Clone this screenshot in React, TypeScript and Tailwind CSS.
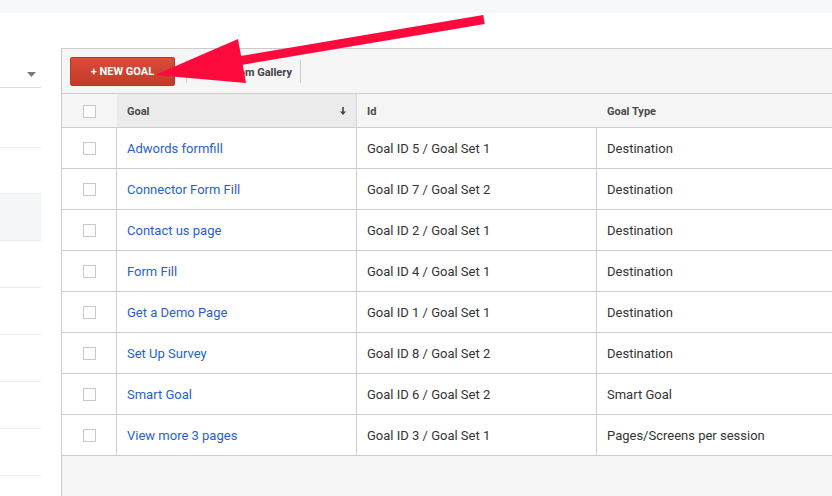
import React from 'react'

const goals = [
    { name: 'Adwords formfill', id: 'Goal ID 5 / Goal Set 1', type: 'Destination' },
    { name: 'Connector Form Fill', id: 'Goal ID 7 / Goal Set 2', type: 'Destination' },
    { name: 'Contact us page', id: 'Goal ID 2 / Goal Set 1', type: 'Destination' },
    { name: 'Form Fill', id: 'Goal ID 4 / Goal Set 1', type: 'Destination' },
    { name: 'Get a Demo Page', id: 'Goal ID 1 / Goal Set 1', type: 'Destination' },
    { name: 'Set Up Survey', id: 'Goal ID 8 / Goal Set 2', type: 'Destination' },
    { name: 'Smart Goal', id: 'Goal ID 6 / Goal Set 2', type: 'Smart Goal' },
    { name: 'View more 3 pages', id: 'Goal ID 3 / Goal Set 1', type: 'Pages/Screens per session' },
]

const Checkbox = () => (
    <span className="block h-[13px] w-[13px] border border-[#c8c8c8] bg-white" />
)

const Sidebar = () => (
    <aside className="w-[41px] shrink-0">
        <div className="flex h-[75px] items-start justify-end border-b border-[#dcdcdc] pr-[5px] pt-[59px]">
            <svg width="9" height="5" viewBox="0 0 9 5">
                <path d="M0 0h9L4.5 5z" fill="#7a7a7a" />
            </svg>
        </div>
        <div className="h-[60px] border-b border-[#ececec]" />
        <div className="h-[46px] border-b border-[#ececec]" />
        <div className="h-[47px] border-b border-[#ececec] bg-[#f5f6f8]" />
        <div className="h-[47px] border-b border-[#ececec]" />
        <div className="h-[47px] border-b border-[#ececec]" />
        <div className="h-[47px] border-b border-[#ececec]" />
        <div className="h-[47px] border-b border-[#ececec]" />
        <div className="h-[47px] border-b border-[#ececec]" />
    </aside>
)

const Toolbar = () => (
    <div className="flex h-[45px] items-start border-b border-[#cccccc] bg-[#f5f5f5] pl-[8px] pt-[8px] shadow-[0_1px_2px_rgba(0,0,0,0.08)]">
        <button className="flex h-[29px] w-[105px] items-center justify-center rounded-[2px] border border-[#b3392a] bg-gradient-to-b from-[#dc4c3a] to-[#c33a29] pt-px text-[11px] font-bold text-white">
            + NEW GOAL
        </button>
        <div className="ml-[11px] mt-[3px] flex h-[23px] items-center border-x border-[#cccccc] px-[8px] pt-[3px]">
            <span className="text-[11px] font-bold text-[#444]">Import from Gallery</span>
        </div>
    </div>
)

const GoalsTable = () => (
    <div>
        <div className="flex h-[34px] border-b border-[#cccccc] bg-[#f5f5f5] text-[11px] font-bold text-[#4a4a4a]">
            <div className="flex w-[55px] items-center justify-center pt-[2px]">
                <Checkbox />
            </div>
            <div className="flex w-[240px] items-center justify-between border-r border-[#d6d6d6] bg-[#ebebeb] pl-[10px] pr-[10px] pt-[3px]">
                <span>Goal</span>
                <svg width="6" height="8" viewBox="0 0 6 8" className="-mt-[2px]">
                    <path d="M2.2 0h1.6v4.5H6L3 8 0 4.5h2.2z" fill="#444" />
                </svg>
            </div>
            <div className="flex w-[240px] items-center pl-[10px] pt-[3px]">Id</div>
            <div className="flex flex-1 items-center pl-[10px] pt-[3px]">Goal Type</div>
        </div>
        {goals.map((goal) => (
            <div key={goal.id} className="flex h-[41px] border-b border-[#cccccc] bg-white text-[13px] text-[#333]">
                <div className="flex w-[55px] items-center justify-center border-r border-[#cccccc]">
                    <Checkbox />
                </div>
                <div className="flex w-[240px] items-center border-r border-[#cccccc] pl-[10px] pt-[2px]">
                    <a className="text-[#1f5fd3]">{goal.name}</a>
                </div>
                <div className="flex w-[240px] items-center border-r border-[#cccccc] pl-[10px] pt-[2px]">
                    {goal.id}
                </div>
                <div className="flex flex-1 items-center pl-[10px] pt-[2px]">{goal.type}</div>
            </div>
        ))}
    </div>
)

export default function App() {
    return (
        <div className="relative h-[496px] w-[832px] overflow-hidden bg-white font-['Roboto','Liberation_Sans',sans-serif]">
            <div className="h-[13px] bg-[#f7f8fa]" />
            <div className="flex">
                <Sidebar />
                <main className="ml-[20px] mt-[35px] flex h-[448px] flex-1 flex-col border-l border-t border-[#cccccc] bg-[#f5f5f5]">
                    <Toolbar />
                    <GoalsTable />
                </main>
            </div>
            <svg className="pointer-events-none absolute left-0 top-0" width="832" height="496" viewBox="0 0 832 496">
                <line x1="484" y1="19.5" x2="238" y2="61" stroke="#ff0a3c" strokeWidth="9" />
                <polygon points="155,75 238,39 246,83" fill="#ff0a3c" />
            </svg>
        </div>
    )
}
